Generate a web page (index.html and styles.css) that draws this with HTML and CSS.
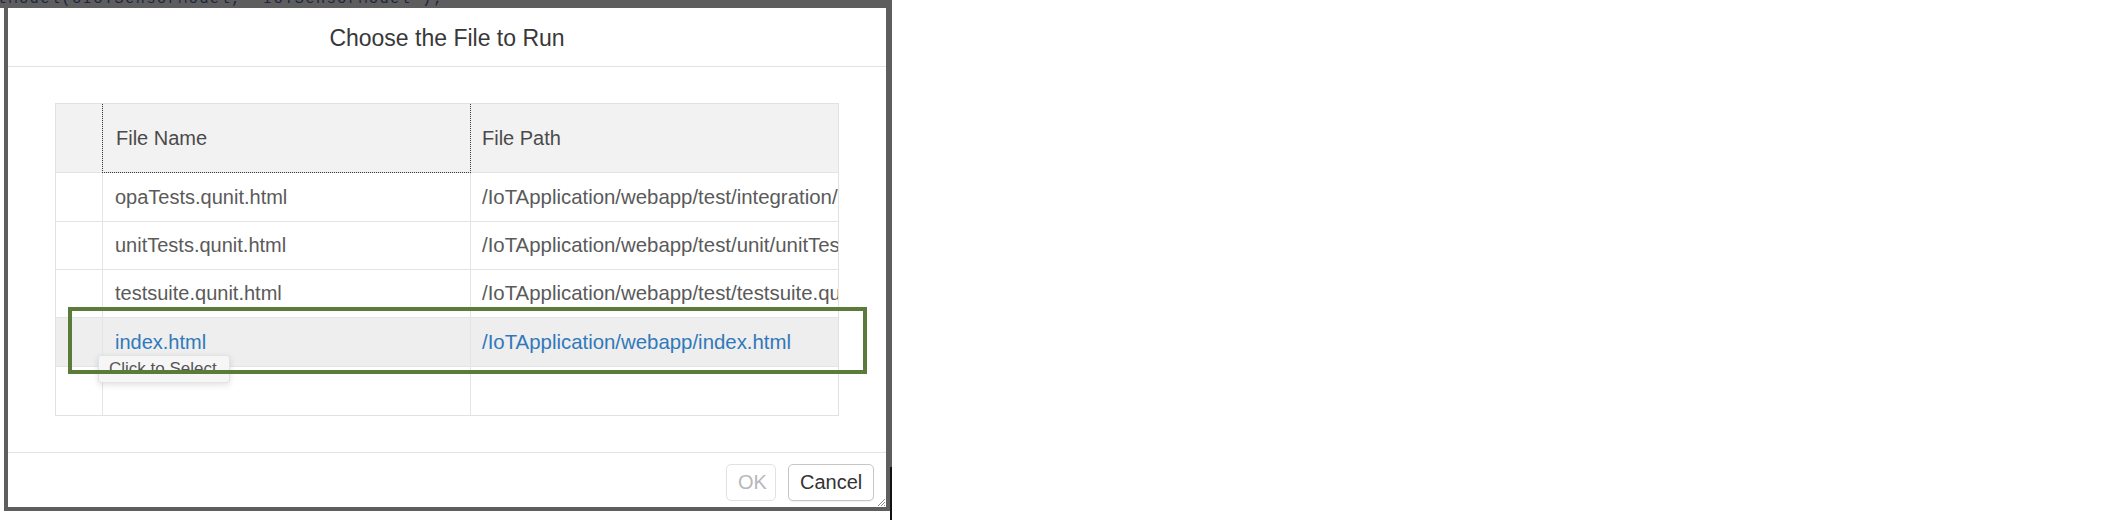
FILE: index.html
```html
<!DOCTYPE html>
<html lang="en">
<head>
<meta charset="utf-8">
<title>Choose the File to Run</title>
<link rel="stylesheet" href="styles.css">
</head>
<body>
<div class="screen">
  <div class="editor-strip"><span class="code">tModel(oIoTSensorModel, "IoTSensorModel");</span></div>
  <div class="stage">
    <div class="gutter"></div>
    <div class="frame">
      <div class="dialog">
        <header class="dlg-header">
          <h1 class="dlg-title">Choose the File to Run</h1>
        </header>
        <div class="dlg-content">
          <div class="table-scroll">
            <div class="row head">
              <div class="cell sel"></div>
              <div class="cell name focus">File Name</div>
              <div class="cell path">File Path</div>
            </div>
            <div class="row r49">
              <div class="cell sel"></div>
              <div class="cell name">opaTests.qunit.html</div>
              <div class="cell path">/IoTApplication/webapp/test/integration/opaTests.qunit.html</div>
            </div>
            <div class="row">
              <div class="cell sel"></div>
              <div class="cell name">unitTests.qunit.html</div>
              <div class="cell path">/IoTApplication/webapp/test/unit/unitTests.qunit.html</div>
            </div>
            <div class="row">
              <div class="cell sel"></div>
              <div class="cell name">testsuite.qunit.html</div>
              <div class="cell path">/IoTApplication/webapp/test/testsuite.qunit.html</div>
            </div>
            <div class="row r49 selected">
              <div class="cell sel"></div>
              <div class="cell name link">index.html</div>
              <div class="cell path link">/IoTApplication/webapp/index.html</div>
            </div>
            <div class="row last">
              <div class="cell sel"></div>
              <div class="cell name"></div>
              <div class="cell path"></div>
            </div>
          </div>
        </div>
        <footer class="dlg-footer">
          <button class="btn btn-disabled" disabled>OK</button>
          <button class="btn">Cancel</button>
        </footer>
        <svg class="grip" width="10" height="10" viewBox="0 0 10 10">
          <path d="M9 2 L2 9 M9 5 L5 9 M9 8 L8 9" stroke="#8a8a8a" stroke-width="1"/>
        </svg>
      </div>
    </div>
  </div>
  <div class="tooltip">Click to Select</div>
  <div class="highlight"></div>
  <div class="edge-line"></div>
</div>
</body>
</html>
```
FILE: styles.css
```css
html, body {
  margin: 0;
  padding: 0;
  background: #ffffff;
}

body {
  font-family: "Liberation Sans", Arial, sans-serif;
  color: #333333;
}

.screen {
  position: relative;
  width: 2126px;
  height: 520px;
  background: #ffffff;
}

.editor-strip {
  width: 892px;
  height: 8px;
  background: #5e5e5e;
  overflow: hidden;
  position: relative;
}

.code {
  display: block;
  font-family: "Liberation Mono", monospace;
  font-size: 15px;
  line-height: 15px;
  color: #1c2540;
  margin-top: -8px;
  margin-left: -2px;
  white-space: pre;
  letter-spacing: 1.6px;
}

.stage {
  display: flex;
}

.gutter {
  width: 4px;
  height: 503px;
  background: #ffffff;
}

.frame {
  width: 878px;
  height: 499px;
  border-left: 4px solid #5e5e5e;
  border-right: 6px solid #5e5e5e;
  border-bottom: 4px solid #5e5e5e;
}

.dialog {
  position: relative;
  width: 878px;
  height: 499px;
  background: #ffffff;
  display: flex;
  flex-direction: column;
}

.dlg-header {
  height: 59px;
  box-sizing: border-box;
  border-bottom: 1px solid #e3e3e3;
  display: flex;
  align-items: center;
  justify-content: center;
}

.dlg-title {
  margin: 0;
  font-size: 23px;
  font-weight: normal;
  color: #383838;
  padding-top: 2px;
}

.dlg-content {
  height: 385px;
  box-sizing: border-box;
  padding: 36px 47px 0 47px;
}

.table-scroll {
  width: 784px;
  height: 313px;
  box-sizing: border-box;
  border: 1px solid #e2e2e2;
  overflow: hidden;
}

.row {
  display: flex;
  width: 960px;
  height: 48px;
  box-sizing: border-box;
  border-bottom: 1px solid #e4e4e4;
  font-size: 20px;
  color: #5a5a5a;
}

.row.r49 {
  height: 49px;
}

.row.head {
  height: 69px;
  background: #f2f2f2;
  color: #4a4a4a;
}

.row.selected {
  background: #eeeeee;
}

.row.last {
  border-bottom: none;
}

.cell {
  display: flex;
  align-items: center;
  box-sizing: border-box;
  white-space: nowrap;
  overflow: hidden;
}

.cell.sel {
  width: 47px;
  border-right: 1px solid #e4e4e4;
}

.cell.name {
  width: 368px;
  border-right: 1px solid #e4e4e4;
  padding-left: 12px;
}

.cell.path {
  width: 545px;
  padding-left: 11px;
  font-size: 20.4px;
}

.row.head .cell.path {
  font-size: 20px;
}

.cell.focus {
  border: 1px dotted #3a3a3a;
  margin: -1px 0 -1px -1px;
  width: 369px;
  padding-left: 13px;
  height: 70px;
}

.cell.link {
  color: #3079bb;
}

.dlg-footer {
  height: 55px;
  box-sizing: border-box;
  border-top: 1px solid #e3e3e3;
  display: flex;
  justify-content: flex-end;
  align-items: flex-start;
  gap: 12px;
  padding: 11px 12px 0 0;
}

.btn {
  height: 37px;
  box-sizing: border-box;
  border: 1px solid #c6c6c6;
  border-radius: 5px;
  background: #ffffff;
  font-family: "Liberation Sans", Arial, sans-serif;
  font-size: 20px;
  color: #333333;
  padding: 0 11px;
  margin: 0;
  box-shadow: 0 1px 1px rgba(0, 0, 0, 0.06);
}

.btn-disabled {
  width: 50px;
  color: #b8b8b8;
  border-color: #e2e2e2;
  box-shadow: none;
}

.btn:not(.btn-disabled) {
  width: 86px;
}

.grip {
  position: absolute;
  right: 0;
  bottom: 0;
}

.highlight {
  position: absolute;
  left: 68px;
  top: 307px;
  width: 799px;
  height: 67px;
  box-sizing: border-box;
  border: 4px solid #5a7b3a;
}

.tooltip {
  position: absolute;
  left: 98px;
  top: 355px;
  width: 132px;
  height: 28px;
  box-sizing: border-box;
  padding-left: 10px;
  background: #f6f6f6;
  border: 1px solid #e3e3e3;
  border-radius: 3px;
  box-shadow: 0 2px 6px rgba(0, 0, 0, 0.12);
  font-size: 17px;
  line-height: 26px;
  color: #555555;
  white-space: nowrap;
}

.edge-line {
  position: absolute;
  left: 890px;
  top: 467px;
  width: 2px;
  height: 53px;
  background: #111111;
}
```
